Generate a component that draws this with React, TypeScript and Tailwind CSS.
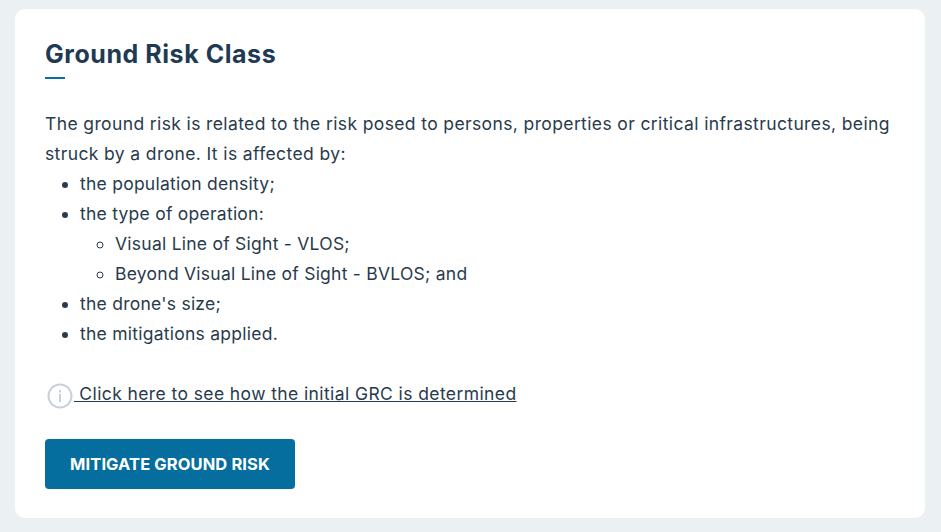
export default function App() {
  return (
    <div className="h-[532px] bg-[#ebf0f3] pl-[15px] pr-4 pt-[9px] font-['Inter',sans-serif] text-[#293a4c]">
      <div className="h-[509px] rounded-[10px] bg-white px-[30px] pt-[30px]">
        <h2 className="text-[25px] font-bold leading-[30px] tracking-[0.55px] text-[#1f3b53]">Ground Risk Class</h2>
        <div className="mt-[8px] h-[2px] w-5 bg-[#0b6e9f]" />
        <div className="mt-[30px] text-[17.5px] leading-[30px] tracking-[0.25px]">
          <p className="tracking-[0.38px]">
            The ground risk is related to the risk posed to persons, properties or critical infrastructures, being struck by a drone. It is affected by:
          </p>
          <ul className="list-disc pl-[35px]">
            <li>the population density;</li>
            <li>
              the type of operation:
              <ul className="list-[circle] pl-[35px]">
                <li>Visual Line of Sight - VLOS;</li>
                <li>Beyond Visual Line of Sight - BVLOS; and</li>
              </ul>
            </li>
            <li>the drone's size;</li>
            <li>the mitigations applied.</li>
          </ul>
        </div>
        <a className="ml-[2px] mt-[30px] flex h-[30px] items-center text-[17.5px] leading-[30px] tracking-[0.4px]">
          <svg width="26" height="26" viewBox="0 0 26 26" fill="none" className="mt-[3px] shrink-0 text-[#c8d1d9]">
            <circle cx="13" cy="13" r="11.5" stroke="currentColor" strokeWidth="2" />
            <rect x="12" y="11" width="2" height="8" fill="currentColor" />
            <rect x="12" y="7" width="2" height="2.5" fill="currentColor" />
          </svg>
          <span className="ml-[1px] whitespace-pre underline"> Click here to see how the initial GRC is determined</span>
        </a>
        <button className="mt-[30px] h-[50px] w-[250px] rounded-[4px] bg-[#056e9f] text-[16.5px] font-bold tracking-[0.1px] text-white">
          MITIGATE GROUND RISK
        </button>
      </div>
    </div>
  );
}
